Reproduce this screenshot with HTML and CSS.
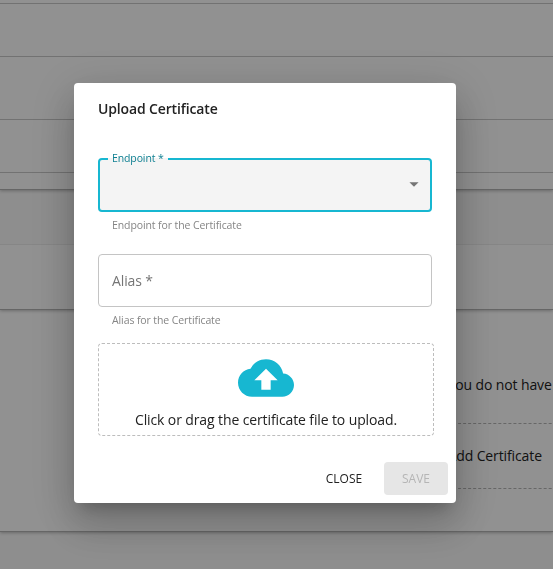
FILE: index.html
```html
<!DOCTYPE html>
<html lang="en">
<head>
<meta charset="utf-8">
<title>Upload Certificate</title>
<link rel="stylesheet" href="styles.css">
</head>
<body>
<main class="page">
  <section class="panel list">
    <div class="row row-cut"></div>
    <div class="row"></div>
    <div class="row row-tall"></div>
    <div class="row"></div>
  </section>
  <section class="panel group">
    <div class="group-head"></div>
    <div class="group-body"></div>
  </section>
  <section class="panel certs">
    <p class="notice">You do not have</p>
    <div class="add">Add Certificate</div>
  </section>
</main>
<div class="backdrop">
  <div class="dialog" role="dialog" aria-labelledby="title">
    <h2 class="title" id="title">Upload Certificate</h2>
    <div class="field select">
      <span class="float-label">Endpoint *</span>
      <svg class="caret" viewBox="0 0 24 24"><path d="M7 10l5 5 5-5z"/></svg>
    </div>
    <p class="help">Endpoint for the Certificate</p>
    <div class="field alias">Alias *</div>
    <p class="help">Alias for the Certificate</p>
    <div class="drop">
      <svg class="cloud" viewBox="0 0 24 24"><path d="M19.35 10.04C18.67 6.59 15.64 4 12 4 9.11 4 6.6 5.64 5.35 8.04 2.34 8.36 0 10.91 0 14c0 3.31 2.69 6 6 6h13c2.76 0 5-2.24 5-5 0-2.64-2.05-4.78-4.65-4.96zM14 13v4h-4v-4H7l5-5 5 5h-3z"/></svg>
      <p class="drop-text">Click or drag the certificate file to upload.</p>
    </div>
    <div class="actions">
      <button class="btn">CLOSE</button>
      <button class="btn save" disabled>SAVE</button>
    </div>
  </div>
</div>
</body>
</html>
```
FILE: styles.css
```css
* { box-sizing: border-box; }
html, body { height: 100%; }
body {
  margin: 0;
  overflow: hidden;
  font: 14px/20px "Open Sans", "Noto Sans", sans-serif;
  letter-spacing: -.115px;
  color: #222;
  background: #fafafa;
}
p, h2 { margin: 0; }
.page { height: 569px; overflow: hidden; }
.panel {
  position: relative;
  background: #fff;
  border-bottom: 1px solid #b4b4b4;
  box-shadow: 0 1px 3px rgba(0, 0, 0, .25);
}
.list { height: 190px; z-index: 3; }
.row { height: 53px; border-bottom: 1px solid #c8c8c8; }
.row-cut { height: 4px; }
.row-tall { height: 63px; }
.group { height: 120px; z-index: 2; }
.group-head { height: 55px; background: #f9f9f9; border-bottom: 1px solid #ececec; }
.certs { height: 222px; z-index: 1; padding: 65px 0 0 447.5px; white-space: nowrap; }
.add {
  width: 300px;
  height: 66px;
  margin-top: 28px;
  line-height: 64px;
  border: 1px dashed #b5b5b5;
  border-left: 0;
}
.backdrop { position: fixed; inset: 0; z-index: 10; background: rgba(0, 0, 0, .43); padding: 83px 0 0 74px; }
.dialog {
  width: 382px;
  height: 420px;
  padding: 16px 24px 0;
  background: #fff;
  border-radius: 4px;
  box-shadow: 0 11px 15px -7px rgba(0, 0, 0, .2), 0 24px 38px 3px rgba(0, 0, 0, .14), 0 9px 46px 8px rgba(0, 0, 0, .12);
}
.title { font-size: 14px; font-weight: 600; line-height: 20px; letter-spacing: -.14px; }
.field { position: relative; display: flex; align-items: center; border-radius: 4px; }
.select {
  height: 54px;
  margin-top: 39px;
  justify-content: flex-end;
  padding: 0 5px 3px 0;
  border: 2px solid #17b7d1;
  background: #f4f4f4;
}
.float-label {
  position: absolute;
  left: 8px;
  top: -8px;
  padding: 0 4px;
  font-size: 10.5px;
  line-height: 13px;
  color: #0d7f91;
  background: linear-gradient(#fff 6px, #f4f4f4 6px);
}
.caret { width: 22px; height: 22px; fill: #757575; }
.help { margin: 6px 14px 0; font-size: 10.5px; line-height: 15px; letter-spacing: -.1px; color: #858585; }
.alias { height: 53px; margin-top: 21px; padding-left: 13px; border: 1px solid #c4c4c4; color: #757575; }
.drop {
  display: flex;
  flex-direction: column;
  align-items: center;
  width: 336px;
  height: 93px;
  margin-top: 15px;
  padding-top: 6px;
  border: 1px dashed #bdbdbd;
  border-radius: 4px;
}
.cloud { width: 56px; height: 56px; fill: #17b7d1; }
.drop-text { margin-top: 4px; }
.actions { display: flex; justify-content: flex-end; margin: 26px -16px 0; }
.btn {
  width: 64px;
  height: 33px;
  padding: 0;
  border: 0;
  border-radius: 4px;
  background: none;
  font: 12px/33px "Open Sans", "Noto Sans", sans-serif;
  color: #222;
}
.btn + .btn { margin-left: 8px; }
.save { background: #e6e6e6; color: #b5b5b5; }
```
